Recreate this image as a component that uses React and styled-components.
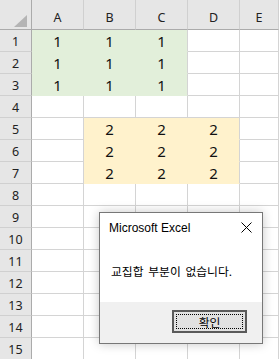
import React from "react";
import styled, { createGlobalStyle } from "styled-components";

const Global = createGlobalStyle`
  html, body { margin: 0; padding: 0; background: #ffffff; }
  body { width: 279px; height: 359px; overflow: hidden; font-family: "Noto Sans", "Liberation Sans", sans-serif; }
  #root { position: relative; width: 279px; height: 359px; overflow: hidden; }
`;

const Sheet = styled.div`
  display: grid;
  grid-template-columns: 32px 52px 52px 52px 52px 1fr;
  grid-template-rows: 30px repeat(15, 22px);
  width: 279px;
`;

const Corner = styled.div`
  background: #e6e6e6;
  border-right: 1px solid #ababab;
  border-bottom: 1px solid #ababab;
  box-sizing: border-box;
  display: flex;
  align-items: flex-end;
  justify-content: flex-end;
  padding: 0 4px 2px 0;
`;

const ColHead = styled.div`
  background: #e6e6e6;
  box-sizing: border-box;
  border-right: 1px solid #d0d0d0;
  border-bottom: 1px solid #ababab;
  display: flex;
  align-items: center;
  justify-content: center;
  padding-top: 6px;
  font-family: "Noto Sans", "Liberation Sans", sans-serif;
  font-size: 12.5px;
  color: #222;
`;

const RowHead = styled.div`
  background: #e6e6e6;
  box-sizing: border-box;
  border-right: 1px solid #ababab;
  border-bottom: 1px solid #d0d0d0;
  display: flex;
  align-items: center;
  justify-content: center;
  padding-top: 1px;
  font-family: "Noto Sans", "Liberation Sans", sans-serif;
  font-size: 12.5px;
  color: #222;
`;

const Cell = styled.div`
  background: ${(p) => p.$fill || "#ffffff"};
  box-sizing: border-box;
  border-right: 1px solid ${(p) => p.$br};
  border-bottom: 1px solid ${(p) => p.$bb};
  display: flex;
  align-items: center;
  justify-content: center;
  padding-top: 1px;
  font-family: "Noto Sans", "Liberation Sans", sans-serif;
  font-size: 15px;
  color: #111;
`;

const Overlay = styled.div`
  position: absolute;
  left: 99px;
  top: 212px;
  width: 164px;
  height: 132px;
  box-sizing: border-box;
  border: 1px solid #777;
  background: #ffffff;
  box-shadow: 0 0 10px rgba(0, 0, 0, 0.22);
  display: flex;
  flex-direction: column;
`;

const TitleBar = styled.div`
  display: flex;
  align-items: center;
  justify-content: space-between;
  height: 29px;
  padding: 0 10px 0 9px;
  font-family: "Liberation Sans", Arial, sans-serif;
  font-size: 12px;
  color: #000;
`;

const Body = styled.div`
  flex: 1;
  display: flex;
  align-items: center;
  padding: 0 0 4px 11px;
  font-family: "Noto Sans CJK KR", "Noto Sans", sans-serif;
  font-size: 11.8px;
  word-spacing: 2px;
  color: #000;
`;

const Footer = styled.div`
  height: 41px;
  background: #f0f0f0;
  display: flex;
  align-items: flex-start;
  justify-content: flex-end;
  padding: 8px 15px 0 0;
  box-sizing: border-box;
`;

const Button = styled.div`
  width: 75px;
  height: 23px;
  box-sizing: border-box;
  border: 2px solid #5a5a5a;
  background: #e1e1e1;
  padding: 2px;
  display: flex;
`;

const Focus = styled.div`
  flex: 1;
  border: 1px dotted #000;
  display: flex;
  align-items: center;
  justify-content: center;
  font-family: "Noto Sans CJK KR", "Noto Sans", sans-serif;
  font-size: 11.8px;
  color: #000;
`;

const cols = ["A", "B", "C", "D", "E"];
const GREEN = "#e2efda";
const YELLOW = "#fff2cc";
const GRID = "#d4d4d4";

function cellInfo(r, c) {
  if (r >= 1 && r <= 3 && c <= 2) return { fill: GREEN, v: "1", last: c === 2 };
  if (r >= 5 && r <= 7 && c >= 1 && c <= 3) return { fill: YELLOW, v: "2", last: c === 3 };
  return null;
}

export default function App() {
  const rows = Array.from({ length: 15 }, (_, i) => i + 1);
  return (
    <>
      <Global />
      <Sheet>
        <Corner>
          <svg width="13" height="12" viewBox="0 0 13 12">
            <polygon points="13,0 13,12 0,12" fill="#b4b4b4" />
          </svg>
        </Corner>
        {cols.map((c) => (
          <ColHead key={c}>{c}</ColHead>
        ))}
        {rows.map((r) => (
          <React.Fragment key={r}>
            <RowHead>{r}</RowHead>
            {cols.map((c, ci) => {
              const info = cellInfo(r, ci);
              if (info) {
                return (
                  <Cell
                    key={c}
                    $fill={info.fill}
                    $br={info.last ? GRID : info.fill}
                    $bb={info.fill}
                  >
                    {info.v}
                  </Cell>
                );
              }
              return <Cell key={c} $br={GRID} $bb={GRID} />;
            })}
          </React.Fragment>
        ))}
      </Sheet>
      <Overlay>
        <TitleBar>
          <span>Microsoft Excel</span>
          <svg width="11" height="11" viewBox="0 0 11 11">
            <path d="M0.5 0.5 L10.5 10.5 M10.5 0.5 L0.5 10.5" stroke="#000" strokeWidth="1" fill="none" />
          </svg>
        </TitleBar>
        <Body>교집합 부분이 없습니다.</Body>
        <Footer>
          <Button>
            <Focus>확인</Focus>
          </Button>
        </Footer>
      </Overlay>
    </>
  );
}
